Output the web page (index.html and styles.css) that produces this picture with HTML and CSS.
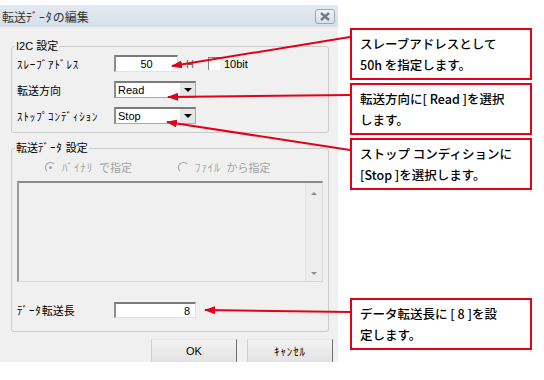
FILE: index.html
```html
<!DOCTYPE html>
<html lang="ja">
<head>
  <meta charset="UTF-8">
  <meta name="viewport" content="width=device-width, initial-scale=1.0">
  <title>転送データの編集</title>
  <link rel="stylesheet" href="styles.css">
</head>
<body>
  <div class="page">
    <div class="dialog">
      <div class="titlebar">
        <span class="title">転送<span class="kana">ﾃﾞｰﾀ</span>の編集</span>
        <span class="close">
          <svg width="12" height="9" viewBox="0 0 12 9"><path d="M2 1 L10 8 M10 1 L2 8"/></svg>
        </span>
      </div>

      <div class="dialog-body">
        <fieldset class="group group-i2c">
          <legend>I2C 設定</legend>
          <div class="row">
            <span class="label kana">ｽﾚｰﾌﾞｱﾄﾞﾚｽ</span>
            <span class="field field-addr">50</span>
            <span class="unit">H</span>
            <span class="check"></span>
            <span class="check-label">10bit</span>
          </div>
          <div class="row">
            <span class="label">転送方向</span>
            <span class="combo"><span class="combo-value">Read</span><span class="combo-btn"></span></span>
          </div>
          <div class="row">
            <span class="label kana">ｽﾄｯﾌﾟｺﾝﾃﾞｨｼｮﾝ</span>
            <span class="combo"><span class="combo-value">Stop</span><span class="combo-btn"></span></span>
          </div>
        </fieldset>

        <fieldset class="group group-data">
          <legend>転送<span class="kana">ﾃﾞｰﾀ</span> 設定</legend>
          <div class="radios">
            <span class="radio-opt"><span class="radio checked"></span><span class="kana">ﾊﾞｲﾅﾘ</span>で指定</span>
            <span class="radio-opt"><span class="radio"></span><span class="kana">ﾌｧｲﾙ</span>から指定</span>
          </div>
          <div class="textbox">
            <div class="scrollbar">
              <span class="arrow-up"></span>
              <span class="arrow-down"></span>
            </div>
          </div>
          <div class="row row-length">
            <span class="label"><span class="kana">ﾃﾞｰﾀ</span>転送長</span>
            <span class="field field-length">8</span>
          </div>
        </fieldset>

        <div class="buttons">
          <button class="btn">OK</button>
          <button class="btn kana">ｷｬﾝｾﾙ</button>
        </div>
      </div>
    </div>

    <div class="notes">
      <div class="note">スレーブアドレスとして<br>50h を指定します。</div>
      <div class="note">転送方向に[ Read ]を選択<br>します。</div>
      <div class="note">ストップ コンディションに<br>[Stop ]を選択します。</div>
      <div class="note note-last">データ転送長に [ 8 ]を設<br>定します。</div>
    </div>

    <svg class="arrows" width="544" height="380" viewBox="0 0 544 380">
      <defs>
        <marker id="head" markerUnits="userSpaceOnUse" markerWidth="11" markerHeight="8" refX="10" refY="4" orient="auto">
          <path d="M0 0 L11 4 L0 8 Z" fill="#e3001b"/>
        </marker>
      </defs>
      <line x1="350" y1="37" x2="172" y2="66" marker-end="url(#head)"/>
      <line x1="350" y1="95" x2="168" y2="97" marker-end="url(#head)"/>
      <line x1="350" y1="150" x2="167" y2="122" marker-end="url(#head)"/>
      <line x1="350" y1="312" x2="205" y2="310" marker-end="url(#head)"/>
    </svg>
  </div>
</body>
</html>
```

FILE: styles.css
```css
body {
  margin: 0;
  background-color: #fff;
  font-family: 'Liberation Sans', 'Noto Sans CJK JP', sans-serif;
  color: #000;
}
.page {
  position: relative;
  display: flex;
  width: 544px;
  height: 380px;
  padding-top: 5px;
  box-sizing: border-box;
}
.dialog {
  width: 338px;
  height: 357px;
  overflow: hidden;
  background-color: #f0f0f0;
  font-size: 11px;
}
.kana {
  letter-spacing: 0.9px;
}
.titlebar {
  display: flex;
  align-items: center;
  justify-content: space-between;
  height: 22px;
  padding: 0 3px 0 2px;
  background: linear-gradient(#e3eaf1, #d5dfe9);
}
.title {
  font-size: 12px;
  color: #333;
}
.close {
  display: flex;
  align-items: center;
  justify-content: center;
  width: 18px;
  height: 13px;
  border: 1px solid #9aa5b3;
  border-radius: 3px;
  background: linear-gradient(#f0f3f7, #d9e0e8);
}
.close path {
  stroke: #6f7b8b;
  stroke-width: 2.4;
}
.dialog-body {
  padding: 12px 5px 0 11px;
}
.group {
  margin: 0 4px 0 0;
  padding: 2px 5px 8px;
  border: 1px solid #cacaca;
  border-radius: 3px;
  min-width: 0;
}
.group legend {
  padding: 0 1px;
  margin-left: -2px;
  line-height: 14px;
  font-size: 11px;
}
.group-i2c {
  display: flex;
  flex-direction: column;
  gap: 9px;
}
.group-data {
  margin-top: 8px;
  padding-top: 5px;
  padding-bottom: 13px;
}
.row {
  display: flex;
  align-items: center;
  height: 17px;
}
.label {
  width: 97px;
  flex-shrink: 0;
}
.field {
  height: 17px;
  box-sizing: border-box;
  line-height: 14px;
  background-color: #fff;
  border-top: 2px solid #7a7a7a;
  border-left: 2px solid #8e8e8e;
  border-right: 1px solid #e2e2e2;
  border-bottom: 1px solid #e2e2e2;
}
.field-addr {
  width: 64px;
  text-align: center;
}
.field-length {
  width: 82px;
  height: 16px;
  text-align: right;
  padding-right: 5px;
}
.unit {
  margin-left: 8px;
  color: #666;
}
.check {
  width: 11px;
  height: 12px;
  margin-left: 14px;
  background-color: #fff;
  border-top: 1px solid #808080;
  border-left: 1px solid #808080;
}
.check-label {
  margin-left: 4px;
}
.combo {
  display: flex;
  width: 82px;
  height: 17px;
  box-sizing: border-box;
  background-color: #fff;
  border-top: 2px solid #7a7a7a;
  border-left: 2px solid #8e8e8e;
  border-right: 1px solid #a8a8a8;
  border-bottom: 1px solid #a8a8a8;
}
.combo-value {
  flex: 1;
  line-height: 14px;
  padding-left: 2px;
}
.combo-btn {
  display: flex;
  align-items: center;
  justify-content: center;
  width: 15px;
  background-color: #e6e6e6;
  border-left: 1px solid #fff;
}
.combo-btn::after {
  content: '';
  border-left: 4px solid transparent;
  border-right: 4px solid transparent;
  border-top: 4px solid #000;
}
.radios {
  display: flex;
  align-items: center;
  height: 14px;
  padding-left: 28px;
  color: #a3a3a3;
}
.radio-opt {
  display: flex;
  align-items: center;
  gap: 6px;
  width: 133px;
}
.radio {
  display: flex;
  align-items: center;
  justify-content: center;
  width: 9px;
  height: 9px;
  border-radius: 50%;
  border: 1px solid;
  border-color: #a0a0a0 #f0f0f0 #f0f0f0 #a0a0a0;
  background-color: #f0f0f0;
}
.radio.checked::after {
  content: '';
  width: 3px;
  height: 3px;
  border-radius: 50%;
  background-color: #a0a0a0;
}
.textbox {
  display: flex;
  justify-content: flex-end;
  height: 101px;
  margin-top: 7px;
  box-sizing: border-box;
  background-color: #f0f0f0;
  border-top: 2px solid #8a8a8a;
  border-left: 2px solid #9c9c9c;
  border-right: 1px solid #d8d8d8;
  border-bottom: 1px solid #d8d8d8;
}
.scrollbar {
  display: flex;
  flex-direction: column;
  justify-content: space-between;
  align-items: center;
  width: 16px;
  padding: 9px 0 6px;
  border-left: 1px solid #e4e4e4;
  background-color: #ededed;
}
.arrow-up {
  border-left: 3px solid transparent;
  border-right: 3px solid transparent;
  border-bottom: 3px solid #8c8c8c;
}
.arrow-down {
  border-left: 3px solid transparent;
  border-right: 3px solid transparent;
  border-top: 3px solid #8c8c8c;
}
.row-length {
  height: 16px;
  margin-top: 20px;
}
.buttons {
  display: flex;
  justify-content: flex-end;
  gap: 10px;
  margin-top: 7px;
}
.btn {
  width: 86px;
  height: 28px;
  padding: 0 0 4px;
  font-family: inherit;
  font-size: 11px;
  color: #000;
  background: linear-gradient(#f2f2f2, #e0e0e0);
  border: 1px solid;
  border-color: #e8e8e8 #707070 #707070 #cfcfcf;
  border-radius: 0;
}
.notes {
  display: flex;
  flex-direction: column;
  gap: 3px;
  width: 182px;
  margin-left: 12px;
  padding-top: 23px;
}
.note {
  height: 52px;
  box-sizing: border-box;
  padding: 3px 6px 0 8px;
  border: 2px solid #e3001b;
  font-family: 'Noto Sans CJK JP', sans-serif;
  font-size: 12.5px;
  font-weight: 500;
  line-height: 21px;
  white-space: nowrap;
}
.note-last {
  margin-top: 105px;
}
.arrows {
  position: absolute;
  top: 0;
  left: 0;
  pointer-events: none;
}
.arrows line {
  stroke: #e3001b;
  stroke-width: 2;
}
```
